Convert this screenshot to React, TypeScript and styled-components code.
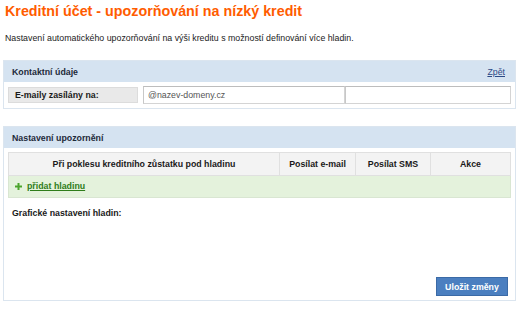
import React from 'react';
import styled, { createGlobalStyle } from 'styled-components';

const GlobalStyle = createGlobalStyle`
  html, body {
    margin: 0;
    padding: 0;
    background: #fff;
  }
  body {
    font-family: "Liberation Sans", Arial, sans-serif;
    font-size: 8.8px;
    color: #1a1a1a;
  }
`;

const Page = styled.div`
  width: 520px;
  box-sizing: border-box;
  padding: 0 4px 0 3px;
`;

const Title = styled.h1`
  margin: 0 0 0 2px;
  font-size: 14.3px;
  line-height: 22px;
  font-weight: bold;
  color: #ff5c00;
`;

const Intro = styled.p`
  margin: 9px 0 0 2px;
  line-height: 14px;
  font-size: 8.8px;
  color: #222;
`;

const Section = styled.section<{ $top: number }>`
  margin-top: ${(p) => p.$top}px;
  border: 1px solid #dbe5ef;
  background: #fff;
`;

const SectionHead = styled.div`
  display: flex;
  align-items: center;
  justify-content: space-between;
  height: 21px;
  padding: 0 10px 0 8px;
  background: #d5e3f1;
  font-weight: bold;
  color: #1e2a3a;
`;

const BackLink = styled.a`
  font-weight: normal;
  color: #2c4a86;
  text-decoration: underline;
  cursor: pointer;
`;

const SectionBody = styled.div`
  padding: 4px;
`;

const FieldRow = styled.div`
  display: flex;
  align-items: stretch;
  height: 18px;
`;

const FieldLabel = styled.div`
  width: 130px;
  box-sizing: border-box;
  margin: 1px 5px 1px 0;
  padding-left: 6px;
  display: flex;
  align-items: center;
  background: #e9e9e9;
  border: 1px solid #dcdcdc;
  font-weight: bold;
`;

const TextInput = styled.input<{ $w: number }>`
  width: ${(p) => p.$w}px;
  box-sizing: border-box;
  height: 18px;
  margin: 0;
  padding: 0 4px;
  border: 1px solid #d4d4d4;
  border-top-color: #bdbdbd;
  border-left-color: #c8c8c8;
  font-family: inherit;
  font-size: 8.8px;
  color: #555;
  outline: none;
  &::placeholder {
    color: #555;
  }
`;

const Table = styled.table`
  width: 100%;
  border-collapse: collapse;
`;

const Th = styled.th<{ $w?: number }>`
  width: ${(p) => (p.$w ? `${p.$w}px` : 'auto')};
  height: 22px;
  padding: 0;
  background: #f3f3f3;
  border: 1px solid #e0e0e0;
  font-weight: bold;
  color: #1a1a1a;
  text-align: center;
`;

const AddRow = styled.td`
  height: 21px;
  padding: 0 0 0 6px;
  background: #e4f2dc;
  border: 1px solid #d9e6d2;
`;

const AddLink = styled.a`
  display: inline-flex;
  align-items: center;
  gap: 5px;
  font-weight: bold;
  color: #2f7d1a;
  text-decoration: underline;
  cursor: pointer;
  svg {
    flex: none;
  }
`;

const GraphTitle = styled.div`
  margin: 8px 0 0 4px;
  line-height: 14px;
  font-weight: bold;
`;

const GraphArea = styled.div`
  height: 57px;
`;

const Actions = styled.div`
  display: flex;
  justify-content: flex-end;
  padding: 0 3px 0 0;
`;

const SaveButton = styled.button`
  width: 72px;
  height: 19px;
  padding: 0;
  border: 1px solid #3b6aa6;
  background: #4b7fc0;
  color: #fff;
  font-family: inherit;
  font-size: 8.8px;
  font-weight: bold;
  cursor: pointer;
`;

// small green "add" marker, a plus with cut corners like the reference
const PlusIcon = () => (
  <svg width="7" height="7" viewBox="0 0 7 7">
    <path d="M2.5 0h2v2.5h2.5v2h-2.5v2.5h-2v-2.5h-2.5v-2h2.5z" fill="#4ba52c" />
  </svg>
);

export default function App() {
  return (
    <>
      <GlobalStyle />
      <Page>
        <Title>Kreditní účet - upozorňování na nízký kredit</Title>
        <Intro>
          Nastavení automatického upozorňování na výši kreditu s možností definování více hladin.
        </Intro>

        <Section $top={15}>
          <SectionHead>
            <span>Kontaktní údaje</span>
            <BackLink>Zpět</BackLink>
          </SectionHead>
          <SectionBody>
            <FieldRow>
              <FieldLabel>E-maily zasílány na:</FieldLabel>
              <TextInput $w={202} placeholder="@nazev-domeny.cz" />
              <TextInput $w={166} />
            </FieldRow>
          </SectionBody>
        </Section>

        <Section $top={17}>
          <SectionHead>
            <span>Nastavení upozornění</span>
          </SectionHead>
          <SectionBody>
            <Table>
              <thead>
                <tr>
                  <Th>Při poklesu kreditního zůstatku pod hladinu</Th>
                  <Th $w={75}>Posílat e-mail</Th>
                  <Th $w={74}>Posílat SMS</Th>
                  <Th $w={79}>Akce</Th>
                </tr>
              </thead>
              <tbody>
                <tr>
                  <AddRow colSpan={4}>
                    <AddLink>
                      <PlusIcon />
                      přidat hladinu
                    </AddLink>
                  </AddRow>
                </tr>
              </tbody>
            </Table>
            <GraphTitle>Grafické nastavení hladin:</GraphTitle>
            <GraphArea />
            <Actions>
              <SaveButton>Uložit změny</SaveButton>
            </Actions>
          </SectionBody>
        </Section>
      </Page>
    </>
  );
}
